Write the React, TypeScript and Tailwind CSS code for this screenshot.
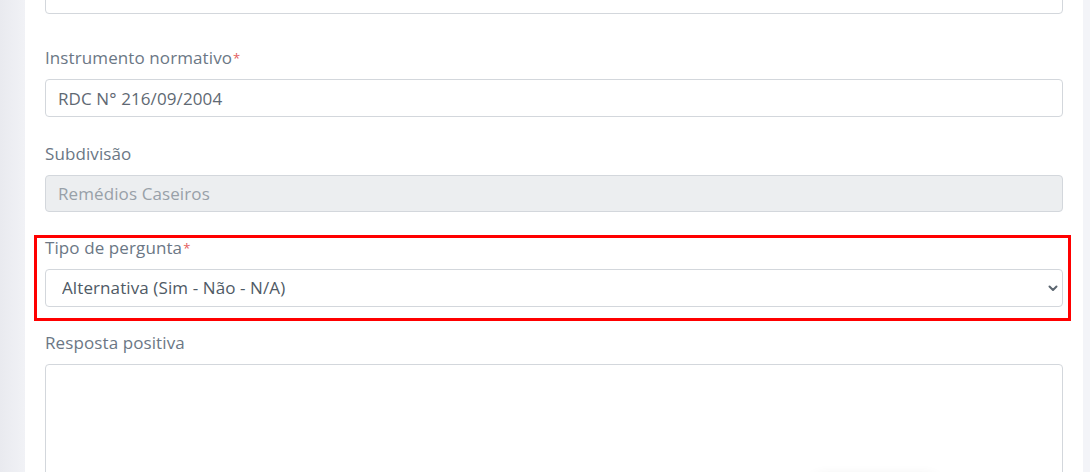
const font = { fontFamily: '"Open Sans", "Liberation Sans", sans-serif' };

function Label({ text, required }: { text: string; required?: boolean }) {
  return (
    <label className="block h-[22px] mb-[10px] text-[17px] leading-[22px] tracking-[0.1px] text-[#6b7785]">
      {text}
      {required && <span className="text-[#e35d5d] text-[13px] align-top ml-[1px]">*</span>}
    </label>
  );
}

export default function App() {
  return (
    <div className="w-[1090px] h-[472px] overflow-hidden flex bg-[#f3f4f8]" style={font}>
      <div className="w-[25px] shrink-0 bg-gradient-to-r from-[#e9eaef] to-[#f1f2f6]" />

      <div className="w-[1058px] shrink-0 bg-white px-5 relative">
        {/* top input, mostly scrolled out of view */}
        <div className="-mt-[24px] h-[38px] rounded-[4px] border border-[#d3d7dc] bg-white" />

        <div className="mt-[33px]">
          <Label text="Instrumento normativo" required />
          <input
            readOnly
            value="RDC N° 216/09/2004"
            className="w-full h-[38px] rounded-[4px] border border-[#d3d7dc] px-3 text-[17px] tracking-[0.1px] text-[#5f6973] outline-none"
          />
        </div>

        <div className="mt-[26px]">
          <Label text="Subdivisão" />
          <input
            readOnly
            value="Remédios Caseiros"
            className="w-full h-[37px] rounded-[4px] border border-[#d3d7dc] bg-[#eceef0] px-3 text-[17px] tracking-[0.1px] text-[#98a0a8] outline-none"
          />
        </div>

        <div className="mt-[25px] relative">
          {/* highlight annotation */}
          <span className="absolute -left-[11px] -right-[8px] -top-[2px] -bottom-[14px] border-[3px] border-[#ff0000] pointer-events-none" />
          <Label text="Tipo de pergunta" required />
          <div className="relative">
            <select
              defaultValue="alt"
              className="w-full h-[38px] appearance-none rounded-[4px] border border-[#d3d7dc] bg-white pl-4 pr-10 text-[17px] tracking-[0.1px] text-[#4f5a65] outline-none"
            >
              <option value="alt">Alternativa (Sim - Não - N/A)</option>
              <option value="dis">Dissertativa</option>
            </select>
            <svg
              className="absolute right-[5px] top-1/2 -translate-y-1/2 w-[10px] h-[8px] pointer-events-none"
              viewBox="0 0 10 8"
              fill="none"
            >
              <path d="M1.5 2.5l3.5 3.5 3.5-3.5" stroke="#5c6670" strokeWidth="2" strokeLinecap="round" strokeLinejoin="round" />
            </svg>
          </div>
        </div>

        <div className="mt-[25px]">
          <Label text="Resposta positiva" />
          <textarea className="w-full h-[140px] rounded-[4px] border border-[#d3d7dc] resize-none outline-none" />
        </div>

        {/* shadow of a floating element just below the view */}
        <div className="absolute left-[790px] top-[478px] w-[120px] h-[20px] rounded-md bg-white shadow-[0_0_14px_rgba(0,0,0,0.12)]" />
      </div>

      <div className="flex-1 bg-[#f3f4f8]" />
    </div>
  );
}
